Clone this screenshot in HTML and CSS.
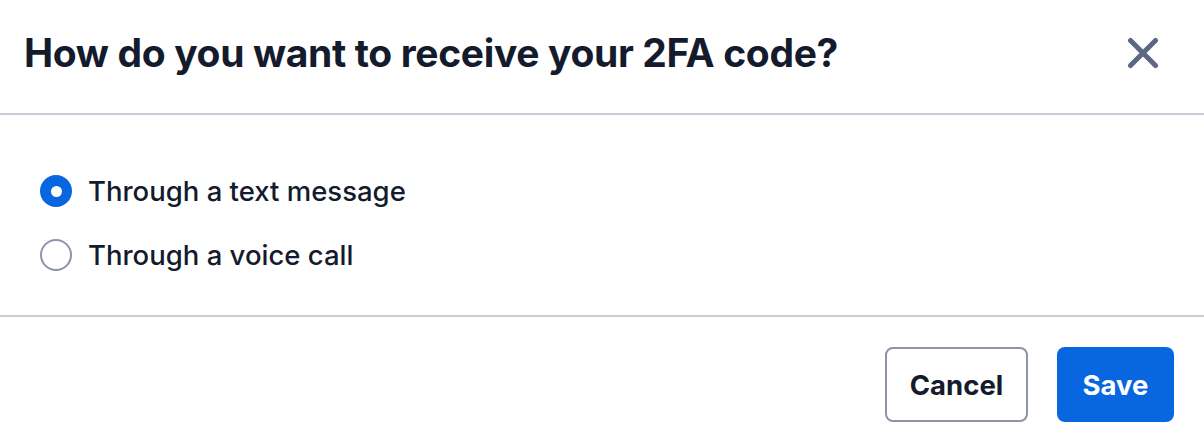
FILE: index.html
```html
<!DOCTYPE html>
<html lang="en">
<head>
<meta charset="utf-8">
<title>2FA</title>
<link rel="stylesheet" href="styles.css">
</head>
<body>
<div class="modal">
  <header class="modal-header">
    <h1 class="modal-title">How do you want to receive your 2FA code?</h1>
    <button class="close-btn" aria-label="Close">
      <svg width="32" height="32" viewBox="0 0 32 32"><path d="M3.5 3.5 L28.5 28.5 M28.5 3.5 L3.5 28.5" stroke="#5b6783" stroke-width="5" stroke-linecap="round" fill="none"/></svg>
    </button>
  </header>
  <section class="modal-body">
    <label class="option">
      <span class="radio checked"></span>
      <span class="option-label">Through a text message</span>
    </label>
    <label class="option">
      <span class="radio"></span>
      <span class="option-label">Through a voice call</span>
    </label>
  </section>
  <footer class="modal-footer">
    <button class="btn btn-secondary">Cancel</button>
    <button class="btn btn-primary">Save</button>
  </footer>
</div>
</body>
</html>
```

FILE: styles.css
```css
html, body {
  margin: 0;
  padding: 0;
  background: #ffffff;
}
body {
  font-family: Inter, "Noto Sans", sans-serif;
  color: #141b2d;
}
.modal {
  width: 1204px;
  height: 446px;
  display: flex;
  flex-direction: column;
}
.modal-header {
  height: 115px;
  border-bottom: 2px solid #cbccd8;
  display: flex;
  align-items: center;
  justify-content: space-between;
  padding: 0 45px 7px 24px;
  box-sizing: border-box;
}
.modal-title {
  margin: 0;
  font-size: 39px;
  font-weight: 700;
  line-height: 48px;
  letter-spacing: -0.35px;
  color: #141b2d;
}
.close-btn {
  background: none;
  border: none;
  padding: 0;
  width: 32px;
  height: 32px;
  display: flex;
  align-items: center;
  justify-content: center;
  cursor: pointer;
}
.modal-body {
  height: 202px;
  border-bottom: 2px solid #cbccd8;
  padding: 56px 40px 0;
  box-sizing: border-box;
  display: flex;
  flex-direction: column;
  gap: 24px;
}
.option {
  display: flex;
  align-items: center;
  height: 40px;
  gap: 16px;
}
.radio {
  width: 32px;
  height: 32px;
  border-radius: 50%;
  border: 2px solid #8c94aa;
  box-sizing: border-box;
  display: flex;
  align-items: center;
  justify-content: center;
  flex: none;
}
.radio.checked {
  background: #0866e0;
  border-color: #0866e0;
}
.radio.checked::after {
  content: "";
  width: 11px;
  height: 11px;
  border-radius: 50%;
  background: #ffffff;
}
.option-label {
  font-size: 27.5px;
  font-weight: 500;
  color: #141b2d;
}
.modal-footer {
  flex: 1;
  display: flex;
  justify-content: flex-end;
  align-items: flex-start;
  padding: 30px 30px 0 0;
  gap: 29px;
}
.btn {
  height: 75px;
  border-radius: 8px;
  font-family: Inter, "Noto Sans", sans-serif;
  font-size: 27.5px;
  font-weight: 700;
  box-sizing: border-box;
  cursor: pointer;
}
.btn-secondary {
  width: 143px;
  background: #ffffff;
  border: 2px solid #8c94aa;
  color: #141b2d;
}
.btn-primary {
  width: 117px;
  background: #0866e0;
  border: none;
  color: #ffffff;
}
```
